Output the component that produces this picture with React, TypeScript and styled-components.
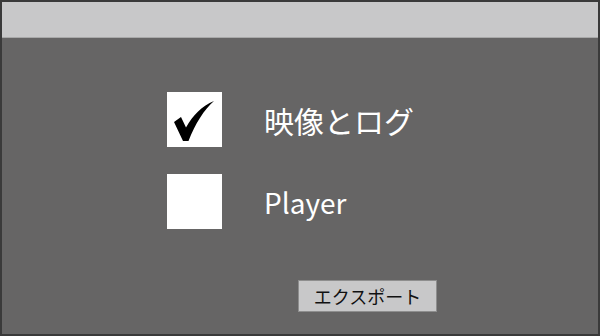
import React from "react";
import styled, { createGlobalStyle } from "styled-components";

const Global = createGlobalStyle`
  html, body { margin: 0; padding: 0; background: #666565; }
  * { box-sizing: border-box; }
`;

const Frame = styled.div`
  width: 600px;
  height: 336px;
  background: #666565;
  border: 2px solid #3a3a3a;
  display: flex;
  flex-direction: column;
  font-family: "Noto Sans CJK JP", "Noto Sans", sans-serif;
  overflow: hidden;
`;

const TopBar = styled.div`
  height: 36px;
  background: #c8c8c9;
  border-bottom: 1px solid #a9a9a9;
  flex: none;
`;

const Content = styled.div`
  flex: 1;
  display: flex;
  flex-direction: column;
  padding: 54px 0 0 165px;
`;

const OptionList = styled.div`
  display: flex;
  flex-direction: column;
  gap: 27px;
`;

const Row = styled.label`
  display: flex;
  align-items: center;
  gap: 42px;
`;

const Box = styled.div`
  width: 55px;
  height: 55px;
  background: #ffffff;
  display: flex;
  align-items: center;
  justify-content: center;
`;

const Label = styled.span<{ $latin?: boolean }>`
  color: #ffffff;
  font-size: ${(p) => (p.$latin ? "28px" : "30px")};
  line-height: 1;
  margin-left: ${(p) => (p.$latin ? "0px" : "0")};
`;

const Footer = styled.div`
  margin-top: 51px;
  padding-left: 131px;
`;

const ExportButton = styled.button`
  width: 139px;
  height: 32px;
  background: #c8c8c9;
  border: 1px solid #8e8e8e;
  color: #111;
  font-family: "Noto Sans CJK JP", "Noto Sans", sans-serif;
  font-size: 18px;
  padding: 0;
  line-height: 1;
  display: flex;
  align-items: center;
  justify-content: center;
`;

const Check = () => (
  <svg width="55" height="55" viewBox="0 0 55 55">
    <path
      d="M7 30 L14 25 L19 35.5 C26 23 35 14 47 9 C37 18 28.5 31 21.5 49 L16 49 Z"
      fill="#000"
    />
  </svg>
);

export default function App() {
  return (
    <>
      <Global />
      <Frame>
        <TopBar />
        <Content>
          <OptionList>
            <Row>
              <Box>
                <Check />
              </Box>
              <Label>映像とログ</Label>
            </Row>
            <Row>
              <Box />
              <Label $latin>Player</Label>
            </Row>
          </OptionList>
          <Footer>
            <ExportButton>エクスポート</ExportButton>
          </Footer>
        </Content>
      </Frame>
    </>
  );
}
